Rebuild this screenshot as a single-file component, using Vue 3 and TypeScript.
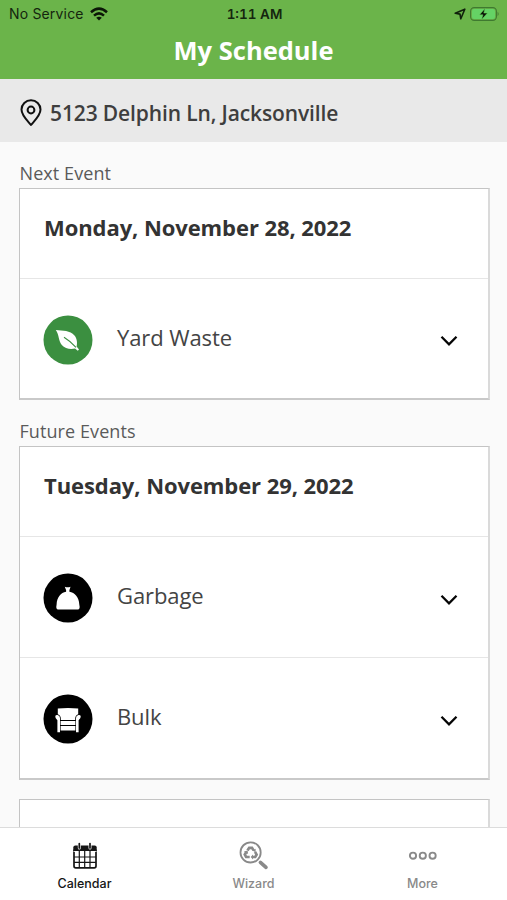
<script setup lang="ts">
type WasteKind = 'yard' | 'garbage' | 'bulk'

interface Pickup {
  kind: WasteKind
  label: string
}

interface ScheduleDay {
  date: string
  pickups: Pickup[]
}

interface ScheduleSection {
  title: string
  days: ScheduleDay[]
}

const address = '5123 Delphin Ln, Jacksonville'

const sections: ScheduleSection[] = [
  {
    title: 'Next Event',
    days: [{ date: 'Monday, November 28, 2022', pickups: [{ kind: 'yard', label: 'Yard Waste' }] }],
  },
  {
    title: 'Future Events',
    days: [
      {
        date: 'Tuesday, November 29, 2022',
        pickups: [
          { kind: 'garbage', label: 'Garbage' },
          { kind: 'bulk', label: 'Bulk' },
        ],
      },
      { date: '', pickups: [] },
    ],
  },
]
</script>

<template>
  <div class="screen">
    <header class="top">
      <div class="status">
        <div class="carrier">
          <span class="carrier-name">No Service</span>
          <svg class="wifi" viewBox="0 0 18 14" width="18" height="14">
            <g fill="none" stroke="#0b1707" stroke-width="2.5">
              <path d="M1 5.2Q9-2 17 5.2" />
              <path d="M4 8.6Q9 4.2 14 8.6" />
            </g>
            <path d="M6.2 10.7Q9 8.7 11.8 10.7L9 13.5Z" fill="#0b1707" />
          </svg>
        </div>
        <span class="clock">1:11 AM</span>
        <div class="indicators">
          <svg viewBox="0 0 12 12" width="12" height="12">
            <path d="M1.2 5.3L10.8 1.2L6.8 10.8L6 6.1Z" fill="none" stroke="#10200b" stroke-width="1.6" stroke-linejoin="round" />
          </svg>
          <svg viewBox="0 0 30 14" width="30" height="14">
            <rect x=".6" y=".6" width="25.8" height="12.8" rx="3.6" fill="none" stroke="#3f7930" stroke-width="1.1" />
            <rect x="2" y="2" width="23" height="10" rx="2.2" fill="#65d365" />
            <path d="M27.6 4.8q2 2.2 0 4.4z" fill="#3f7930" />
            <path d="M15 1.5L9.6 7.8H13L11.6 12.6L17.4 6.1H13.8Z" fill="#071005" stroke="#65c957" stroke-width=".5" />
          </svg>
        </div>
      </div>
      <h1 class="title">My Schedule</h1>
    </header>

    <div class="address">
      <svg viewBox="0 0 22 28" width="22" height="28">
        <g fill="none" stroke="#101010" stroke-width="2">
          <path d="M11 26C8.5 22.8 1.5 16.8 1.5 10.6a9.5 9.3 0 0 1 19 0C20.5 16.8 13.5 22.8 11 26Z" stroke-linejoin="round" />
          <circle cx="11" cy="11" r="3.4" />
        </g>
      </svg>
      <span class="address-text">{{ address }}</span>
    </div>

    <main class="schedule">
      <section v-for="section in sections" :key="section.title" class="section">
        <h2 class="section-title">{{ section.title }}</h2>
        <article v-for="(day, i) in section.days" :key="i" class="card">
          <h3 class="date">{{ day.date }}</h3>
          <div v-for="pickup in day.pickups" :key="pickup.kind" class="pickup">
            <svg v-if="pickup.kind === 'yard'" class="badge" viewBox="0 0 50 50">
              <circle cx="25" cy="25" r="24.5" fill="#3b8f40" />
              <path d="M12.8 15C20 15.8 27 15.3 31.5 20.5C34.3 24 34.4 28.5 33.6 31.6L36 34.6L34.8 35.8L32 33.4C27.5 34.6 22 33.6 18.8 30C15.2 25.5 16.5 20.5 12.8 15Z" fill="#fff" />
              <path d="M21 22.2Q27.5 26.2 33 32.3" fill="none" stroke="#3b8f40" stroke-width="1.1" />
            </svg>
            <svg v-else-if="pickup.kind === 'garbage'" class="badge" viewBox="0 0 50 50">
              <circle cx="25" cy="25" r="24.5" fill="#000" />
              <path d="M21.8 13.7Q24.7 14.8 27.5 13.7L26.4 17.2V18.8C31.8 19.8 36 24 36.3 31.5Q37.4 36.4 34.8 36.6H15.1Q12.6 36.4 13.6 31.5C14 24 17.8 19.8 23.1 18.8V17.2Z" fill="#fff" />
            </svg>
            <svg v-else class="badge" viewBox="0 0 50 50">
              <circle cx="25" cy="25" r="24.5" fill="#000" />
              <path d="M14.8 14.5Q25 13.4 35.2 14.5V20.3Q31.8 21.3 32.2 26H17.8Q18.2 21.3 14.8 20.3Z" fill="#fff" />
              <path d="M12.3 22.3Q12.5 20.8 14.5 21Q17 21.4 17 24V38.2H14.4V26.3Q12 24.5 12.3 22.3ZM37.7 22.3Q37.5 20.8 35.5 21Q33 21.4 33 24V38.2H35.6V26.3Q38 24.5 37.7 22.3Z" fill="#fff" />
              <path d="M17.6 27.1H32.4V31H17.6ZM17.6 32H32.4V36.6H17.6Z" fill="#fff" />
            </svg>
            <span class="label">{{ pickup.label }}</span>
            <svg class="chevron" viewBox="0 0 18 12" width="18" height="12">
              <path d="M1.5 1.8L9 9.3L16.5 1.8" fill="none" stroke="#050505" stroke-width="2.3" />
            </svg>
          </div>
        </article>
      </section>
    </main>

    <nav class="tabs">
      <a class="tab active">
        <svg class="tab-icon" viewBox="0 0 32 32">
          <rect x="5" y="9.4" width="22" height="18.4" rx="1.8" fill="none" stroke="currentColor" stroke-width="1.7" />
          <path d="M4.3 11V7.6q0-2 2-2H25.7q2 0 2 2v3.4Z" fill="currentColor" />
          <path d="M4.5 11.5H27.5" stroke="#fff" stroke-width=".8" />
          <path d="M10.3 11V27.5M15.7 11V27.5M21 11V27.5M5 17H27M5 22.3H27" stroke="currentColor" stroke-width="1.2" />
          <path d="M10.3 5V8M21 5V8" stroke="#fff" stroke-width="3" stroke-linecap="round" />
          <path d="M10.3 3.6V8M21 3.6V8" stroke="currentColor" stroke-width="1.7" stroke-linecap="round" />
        </svg>
        <span class="tab-label">Calendar</span>
      </a>
      <a class="tab">
        <svg class="tab-icon" viewBox="0 0 32 32">
          <circle cx="12.6" cy="12.4" r="10.1" fill="none" stroke="currentColor" stroke-width="1.8" />
          <path d="M22.4 22.4L28 27.4" stroke="currentColor" stroke-width="3.6" stroke-linecap="round" />
          <g fill="none" stroke="currentColor" stroke-width="2.7">
            <path d="M9.5 10.5L11.2 7.8H14L15.6 10.4" />
            <path d="M17.1 11.9L18.6 14.7L17.2 17H14" />
            <path d="M11.7 17H8.1L6.8 14.6L8.3 12" />
          </g>
          <path d="M17.6 8.8V12.2L14.3 10.6ZM15 14.5V19.4L12.7 17ZM5.9 11.5L9.6 10.6L10.1 14Z" fill="currentColor" />
        </svg>
        <span class="tab-label">Wizard</span>
      </a>
      <a class="tab">
        <svg class="tab-icon" viewBox="0 0 32 32">
          <g fill="none" stroke="currentColor" stroke-width="1.9">
            <circle cx="6" cy="15.7" r="3.1" />
            <circle cx="15.8" cy="15.7" r="3.1" />
            <circle cx="25.6" cy="15.7" r="3.1" />
          </g>
        </svg>
        <span class="tab-label">More</span>
      </a>
    </nav>
  </div>
</template>

<style>
body {
  background: #fafafa;
}
</style>

<style scoped>
.screen {
  height: 900px;
  display: flex;
  flex-direction: column;
  overflow: hidden;
  background: #fafafa;
  font-family: 'Open Sans', 'Noto Sans', sans-serif;
  color: #333;
}

.top {
  flex: none;
  height: 79px;
  background: #6bb44a;
}

.status {
  height: 27px;
  padding: 0 7px 0 9px;
  display: grid;
  grid-template-columns: 1fr auto 1fr;
  align-items: center;
  font-family: Inter, sans-serif;
  font-size: 14px;
  color: #14250e;
}

.carrier {
  display: flex;
  align-items: center;
  gap: 6px;
}

.carrier-name {
  letter-spacing: 0.17px;
}

.clock {
  font-weight: 600;
  font-size: 13.5px;
  font-feature-settings: 'tnum';
}

.indicators {
  display: flex;
  justify-content: flex-end;
  align-items: center;
  gap: 4px;
}

.title {
  margin: 0;
  text-align: center;
  color: #fff;
  font-size: 25.5px;
  line-height: 46px;
  font-weight: 700;
}

.address {
  flex: none;
  height: 63px;
  padding: 4px 20px 0;
  box-sizing: border-box;
  display: flex;
  align-items: center;
  gap: 8px;
  background: #e9e9e9;
}

.address-text {
  font-size: 21px;
  font-weight: 600;
  line-height: 30px;
  letter-spacing: -0.13px;
  white-space: nowrap;
  color: #3e3e3e;
}

.schedule {
  flex: 1;
  min-height: 0;
  overflow: hidden;
  padding: 18px 17px 0 19px;
}

.section-title {
  margin: 0;
  height: 28px;
  padding-left: 0.5px;
  font-size: 18px;
  line-height: 26px;
  letter-spacing: 0.08px;
  font-weight: 400;
  color: #5a5a5a;
}

.card {
  box-sizing: border-box;
  margin-bottom: 18px;
  background: #fff;
  border-style: solid;
  border-width: 1px 2px 2px 1px;
  border-color: #c4c4c4 #dadada #c9c9c9 #c4c4c4;
}

.card + .card {
  margin-top: 19px;
}

.date {
  margin: 0;
  height: 89px;
  padding: 22px 24px 0;
  box-sizing: border-box;
  font-size: 22px;
  line-height: 32px;
  letter-spacing: -0.08px;
  font-weight: 700;
  white-space: nowrap;
}

.pickup {
  height: 121px;
  box-sizing: border-box;
  padding: 2px 30px 0 23px;
  border-top: 1px solid #e6e6e6;
  display: flex;
  align-items: center;
}

.pickup:last-child {
  height: 120px;
}

.pickup + .pickup {
  height: 121px;
}

.badge {
  width: 50px;
  height: 50px;
  flex: none;
}

.label {
  flex: 1;
  margin-left: 24px;
  padding-bottom: 6px;
  font-size: 22px;
  line-height: 30px;
  letter-spacing: -0.1px;
  color: #444;
}

.chevron {
  flex: none;
  margin-top: 3px;
}

.tabs {
  flex: none;
  height: 73px;
  box-sizing: border-box;
  border-top: 1px solid #dcdcdc;
  background: #fff;
  display: grid;
  grid-template-columns: repeat(3, 1fr);
  font-family: Inter, sans-serif;
}

.tab {
  display: flex;
  flex-direction: column;
  align-items: center;
  padding-top: 12px;
  color: #898989;
}

.tab.active {
  color: #151515;
}

.tab-icon {
  width: 32px;
  height: 32px;
}

.tab-label {
  margin-top: 4px;
  font-size: 12.5px;
  line-height: 16px;
  font-weight: 500;
}
</style>
